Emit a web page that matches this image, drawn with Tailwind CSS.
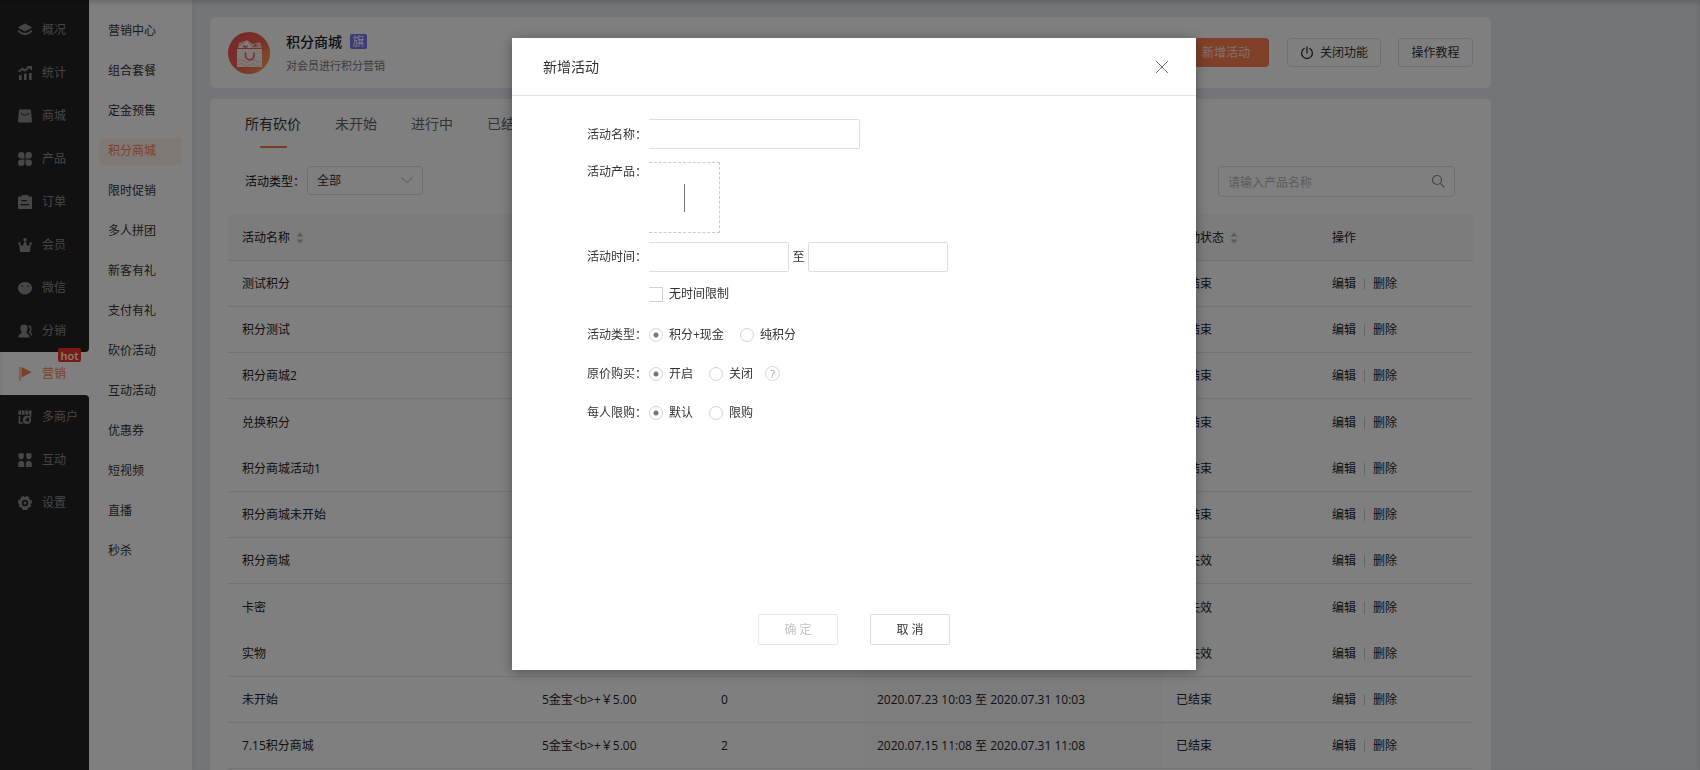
<!DOCTYPE html>
<html lang="zh-CN">
<head>
<meta charset="utf-8">
<title>积分商城</title>
<script src="https://cdn.jsdelivr.net/npm/@tailwindcss/browser@4"></script>
</head>
<body class="min-h-screen bg-[#e8eaef] font-['Open_Sans','Noto_Sans_CJK_SC',sans-serif] text-xs text-[#333]">
<div class="flex min-h-screen">
  <nav id="main-nav" aria-label="主导航" class="flex w-[89px] shrink-0 flex-col bg-white"></nav>
  <nav id="sub-nav" aria-label="营销" class="z-10 flex w-[103px] shrink-0 flex-col bg-white px-2 pt-[11px] shadow-[2px_0_4px_rgba(60,80,110,0.06)]"></nav>

  <main class="flex max-w-[1299px] grow flex-col pl-[18px] pt-[17px]">
    <header class="flex h-[71px] shrink-0 items-center rounded-md bg-white px-[18px]">
      <svg class="size-[42px]" viewBox="0 0 42 42" aria-hidden="true">
        <defs><linearGradient id="g" x1="0" y1="0" x2="1" y2="1"><stop offset="0" stop-color="#f04b5c"/><stop offset=".55" stop-color="#f2644c"/><stop offset="1" stop-color="#ffa35c"/></linearGradient></defs>
        <circle cx="21" cy="21" r="21" fill="url(#g)"/>
        <path d="M33 20l9-5a21 21 0 0 1-8 22z" fill="#ffa04a" opacity=".45"/>
        <path d="M10 16l1-5 8-3 6 4 7-2 2 6z" fill="#ffc9bd"/>
        <path d="M10 16l9-7 5 7z" fill="#fff"/>
        <path d="M14 15l2-2 2 1 2-1-1 3zM25 15l2-3 3 2z" fill="#ee6a62"/>
        <path d="M9 17h25v18H9z" fill="#fff" opacity=".92"/>
        <path d="M10 29q3-3 6 0t6 0 6 0 5 0M10 33q3-3 6 0t6 0 6 0 5 0" fill="none" stroke="#f6c2b6"/>
        <path d="M17.500 20.500v3a4.200 4.200 0 0 0 8.400 0v-3" fill="none" stroke="#ef6150" stroke-width="1.600"/>
      </svg>
      <div class="ml-4 grow pt-0.5">
        <div class="flex items-center gap-2">
          <h1 class="text-sm leading-5 font-medium text-[#222]">积分商城</h1>
          <span class="flex h-[15px] w-[17px] items-center justify-center rounded-xs bg-[#7476ee] text-xs leading-none text-white">旗</span>
        </div>
        <p class="mt-1 text-[11px] leading-5 text-[#777]">对会员进行积分营销</p>
      </div>
      <button class="h-[29px] w-[86px] rounded bg-[#ff7f50] text-white/80">新增活动</button>
      <button class="ml-[18px] flex h-[29px] w-[94px] items-center justify-center gap-1.5 rounded border border-[#dcdee2]">
        <svg class="size-3.5" viewBox="0 0 14 14" fill="none" stroke="#333" stroke-width="1.300" stroke-linecap="round" aria-hidden="true"><path d="M4.200 2.500a5.400 5.400 0 1 0 5.600 0M7 1v6"/></svg>关闭功能</button>
      <button class="ml-[17px] h-[29px] w-[75px] rounded border border-[#dcdee2]">操作教程</button>
    </header>

    <section class="mt-[11px] grow rounded-t bg-white px-[18px]">
      <div role="tablist" class="flex h-[49px] gap-[34px] pl-[17px] text-sm text-[#666]">
        <button role="tab" aria-selected="true" class="flex flex-col items-center justify-between pt-[15px] leading-5 text-[#333]">所有砍价<span class="h-0.5 w-[27px] rounded bg-[#ff7043]"></span></button>
        <button role="tab" class="pb-[14px] pt-[15px] leading-5">未开始</button>
        <button role="tab" class="pb-[14px] pt-[15px] leading-5">进行中</button>
        <button role="tab" class="pb-[14px] pt-[15px] leading-5">已结束</button>
      </div>
      <div class="mt-[18px] flex h-[31px] items-start justify-between pl-[17px] pr-[18px]">
        <div class="flex items-center">
          <label for="type" class="w-[62px] pt-0.5 text-[#111]">活动类型：</label>
          <div class="relative">
            <select id="type" class="h-[29px] w-[116px] appearance-none rounded border border-[#dcdee2] bg-transparent px-[9px]"><option>全部</option></select>
            <svg class="pointer-events-none absolute right-2.5 top-2.5 h-2 w-3" viewBox="0 0 12 8" fill="none" stroke="#aaa" aria-hidden="true"><path d="M.5 1.500L6 6.500l5.500-5"/></svg>
          </div>
        </div>
        <div class="relative">
          <input type="search" aria-label="请输入产品名称" placeholder="请输入产品名称" class="h-[31px] w-[237px] rounded-sm border border-[#dcdee2] px-[9px] pt-0.5 placeholder:text-[#b8b8b8]">
          <svg class="absolute right-2.5 top-2 size-3.5" viewBox="0 0 14 14" fill="none" stroke="#888" stroke-width="1.200" aria-hidden="true"><circle cx="6" cy="6" r="4.500"/><path d="M9.300 9.300l4 4"/></svg>
        </div>
      </div>
      <table class="mt-[17px] w-full table-fixed border-separate border-spacing-0 text-left text-[#222]">
        <colgroup><col class="w-[300px]"><col class="w-[179px]"><col class="w-[156px]"><col class="w-[299px]"><col class="w-[156px]"><col></colgroup>
        <thead class="bg-[#f8f8f9]">
          <tr class="h-[47px]">
            <th class="rounded-tl border-b border-[#e5e6e9] px-3.5 pt-0.5 font-normal"><span class="flex items-center gap-1">活动名称<svg class="size-3" viewBox="0 0 12 12" fill="#b5b5b9" aria-hidden="true"><path d="M2.500 4.500L6 .5l3.500 4zM2.500 7.500L6 11.500l3.500-4z"/></svg></span></th>
            <th class="border-b border-[#e5e6e9]"></th>
            <th class="border-b border-[#e5e6e9]"></th>
            <th class="border-b border-[#e5e6e9]"></th>
            <th class="border-b border-[#e5e6e9] px-3.5 pt-0.5 font-normal"><span class="flex items-center gap-1">活动状态<svg class="size-3" viewBox="0 0 12 12" fill="#b5b5b9" aria-hidden="true"><path d="M2.500 4.500L6 .5l3.500 4zM2.500 7.500L6 11.500l3.500-4z"/></svg></span></th>
            <th class="rounded-tr border-b border-[#e5e6e9] px-3.5 pt-0.5 font-normal">操作</th>
          </tr>
        </thead>
        <tbody id="rows"></tbody>
      </table>
    </section>
  </main>
</div>

<div class="fixed inset-0 z-20 flex items-start justify-center bg-black/50 pl-2 pt-[38px] shadow-[inset_0_3px_4px_rgba(0,0,0,0.15)]">
  <form role="dialog" aria-labelledby="dlg" class="flex min-h-[632px] w-[684px] flex-col bg-white shadow-[0_2px_12px_rgba(0,0,0,0.35)]">
    <div class="flex h-[58px] items-center justify-between border-b border-[#e3e3e8] pl-[31px] pr-7">
      <h2 id="dlg" class="text-sm">新增活动</h2>
      <button type="button" aria-label="关闭"><svg class="size-3" viewBox="0 0 12 12" fill="none" stroke="#777" aria-hidden="true"><path d="M0 0l12 12M12 0L0 12"/></svg></button>
    </div>
    <div class="flex grow flex-col pl-[75px] pt-[23px]">
      <div class="flex h-[30px] items-center">
        <label for="name" class="w-[62px] pt-0.5">活动名称：</label>
        <input id="name" class="h-[30px] w-[211px] rounded-r-xs border border-l-0 border-[#dddde4] px-2">
      </div>
      <div class="mt-[13px] flex items-start">
        <span class="w-[62px] leading-5">活动产品：</span>
        <button type="button" aria-label="选择产品" class="flex size-[71px] items-center justify-center border border-l-0 border-dashed border-[#ccc]"><span class="h-7 w-px bg-[#777]"></span></button>
      </div>
      <div class="mt-[9px] flex h-[30px] items-center">
        <label for="from" class="w-[62px]">活动时间：</label>
        <input id="from" class="h-[30px] w-[140px] rounded-r-xs border border-l-0 border-[#dddde4] px-2">
        <label for="to" class="w-[19px] text-center">至</label>
        <input id="to" class="h-[30px] w-[140px] rounded-xs border border-[#dddde4] px-2">
      </div>
      <label class="ml-[62px] mt-[14px] flex h-4 items-center gap-1.5"><input type="checkbox" class="h-[15px] w-[14px] appearance-none border border-l-0 border-[#d0d0d4]">无时间限制</label>
      <div class="mt-[13px] flex h-[39px] items-center" role="radiogroup" aria-label="活动类型">
        <span class="w-[62px]">活动类型：</span>
        <label class="flex items-center gap-1.5"><input type="radio" name="kind" checked class="size-3.5 appearance-none rounded-full border border-[#d4d4d8] checked:bg-[radial-gradient(#777_2px,transparent_3px)]">积分+现金</label>
        <label class="ml-4 flex items-center gap-1.5"><input type="radio" name="kind" class="size-3.5 appearance-none rounded-full border border-[#d4d4d8] checked:bg-[radial-gradient(#777_2px,transparent_3px)]">纯积分</label>
      </div>
      <div class="flex h-[39px] items-center" role="radiogroup" aria-label="原价购买">
        <span class="w-[62px]">原价购买：</span>
        <label class="flex items-center gap-1.5"><input type="radio" name="full" checked class="size-3.5 appearance-none rounded-full border border-[#d4d4d8] checked:bg-[radial-gradient(#777_2px,transparent_3px)]">开启</label>
        <label class="ml-4 flex items-center gap-1.5"><input type="radio" name="full" class="size-3.5 appearance-none rounded-full border border-[#d4d4d8] checked:bg-[radial-gradient(#777_2px,transparent_3px)]">关闭</label>
        <span class="ml-3 flex size-[15px] items-center justify-center rounded-full border border-[#d4d4d8] text-[11px] leading-none text-[#999]">?</span>
      </div>
      <div class="flex h-[39px] items-center" role="radiogroup" aria-label="每人限购">
        <span class="w-[62px]">每人限购：</span>
        <label class="flex items-center gap-1.5"><input type="radio" name="cap" checked class="size-3.5 appearance-none rounded-full border border-[#d4d4d8] checked:bg-[radial-gradient(#777_2px,transparent_3px)]">默认</label>
        <label class="ml-4 flex items-center gap-1.5"><input type="radio" name="cap" class="size-3.5 appearance-none rounded-full border border-[#d4d4d8] checked:bg-[radial-gradient(#777_2px,transparent_3px)]">限购</label>
      </div>
    </div>
    <div class="flex justify-center gap-8 pb-[25px]">
      <button type="button" disabled class="h-[31px] w-20 rounded-xs border border-[#e8e8e8] text-[#c4c4c4]">确 定</button>
      <button type="button" class="h-[31px] w-20 rounded-xs border border-[#dcdce4]">取 消</button>
    </div>
  </form>
</div>

<script>
const nav = [
  ['概况', '<path d="M7 1l6.500 3.500L7 8 .5 4.500z" stroke="currentColor" stroke-linejoin="round"/><path d="M.8 8.300Q7 14 13.200 8.300" fill="none" stroke="currentColor" stroke-width="2.200" stroke-linecap="round"/>'],
  ['统计', '<path d="M1 9h2.600v5H1zM6 7.500h2.600V14H6zM11 7h2.600v7H11z"/><path d="M.5 5.500L4.500 3l2.500 1.500L10.500 1.500" fill="none" stroke="currentColor" stroke-width="2"/><path d="M8.500 0H14v4.500z"/>'],
  ['商城', '<path fill-rule="evenodd" d="M2.500.5h9a1.500 1.500 0 0 1 1.500 1.300l1 10.200a1.500 1.500 0 0 1-1.500 1.500h-11A1.500 1.500 0 0 1 0 12L1 1.800A1.500 1.500 0 0 1 2.500.5zM3 3.500q4 4.500 8 0v1.500q-4 3-8 0z"/>'],
  ['产品', '<path d="M3.300 0A3.300 3.300 0 0 1 6.500 3.200v3.300H3.300a3.250 3.250 0 0 1 0-6.500zM10.700 0a3.250 3.250 0 0 1 0 6.500H7.500V3.200A3.300 3.300 0 0 1 10.700 0zM3.300 7.500h3.200v3.300A3.250 3.250 0 1 1 3.300 7.500zM7.500 7.500h3.200a3.250 3.250 0 1 1-3.200 3.300z"/>'],
  ['订单', '<path fill-rule="evenodd" d="M3.500 1.500V0h7v1.500H13a1 1 0 0 1 1 1V13a1 1 0 0 1-1 1H1a1 1 0 0 1-1-1V2.500a1 1 0 0 1 1-1zM3.500 5v1.300h5V5zM2.500 9v1.300h8.500V9z"/>'],
  ['会员', '<circle cx="7" cy="1.800" r="1.700"/><circle cx="1.300" cy="5.500" r="1.300"/><circle cx="12.700" cy="5.500" r="1.300"/><path d="M1 6l3.500 2L7 2.500 9.500 8 13 6l-1.200 8H2.200z"/>'],
  ['微信', '<path fill-rule="evenodd" d="M7 1c4 0 7 2.600 7 6s-3 6.500-7 6.500S0 10.400 0 7s3-6 7-6zM3.500 4.500v1.300H5V4.500zm5.500 0v1.300h1.500V4.500z"/>'],
  ['分销', '<path d="M6 .5a3.600 3.600 0 0 1 3.600 3.600c0 1.800-.6 3-1.400 3.900 0 1.500 3.300 1.800 3.300 5.500H.3C.3 9.800 3.800 9.500 3.800 8c-.9-.9-1.400-2.100-1.400-3.900A3.600 3.600 0 0 1 6 .5z"/><path d="M10.500 2c3.500.5 2.500 4.500 1 6.200 1.300.8 2 1.600 2.200 3.300" fill="none" stroke="currentColor" stroke-width="1.300"/>'],
  ['营销', '<path d="M1.500 0h1v14h-1zM3.500 0l10 5.300-10 5.200z"/>'],
  ['多商户', '<path d="M.5.5h2.800v4.300H1.500a1.300 1.300 0 0 1-1.300-1.300zM4 .5h2.600v4.300H4zM7.400.5H10v4.300H7.400zM10.700.5h2.800v3a1.300 1.300 0 0 1-1.300 1.300h-1.500z"/><path d="M1.500 6v7H5M12.500 5v2" fill="none" stroke="currentColor" stroke-width="1.600"/><path fill-rule="evenodd" d="M9 5.800a4.100 4.100 0 1 1 0 8.200 4.100 4.100 0 0 1 0-8.200zM9.500 7.500l-3 3.200h3V12H11V7.500z"/>'],
  ['互动', '<path d="M.5.500Q3-.3 5.800.5v3.500L4.500 6.300H1.800L.5 4zM8.200.5q2.800-.8 5.300 0v3.500l-1.300 2.300H9.500L8.200 4zM2 8h2.500l1.700 1.700V14H.3V9.700zM9.500 8H12l1.700 1.700V14H7.800V9.700z"/>'],
  ['设置', '<path fill-rule="evenodd" d="M5.500 0L7 1.200 8.500 0l2.700 1.200v2L13.500 4 14 7l-1.500 1.200.6 2.600-2.600.8L9 14H5l-1.500-2.400-2.600-.8.600-2.600L0 7l.5-3 2.300-.8v-2zM7 3.800a3.200 3.200 0 1 0 0 6.400 3.200 3.200 0 0 0 0-6.400z"/><circle cx="7" cy="7" r="1.500"/>']
];
const item = ([t, p]) => `<a href="#" class="${t === '营销'
  ? 'relative flex h-[43px] items-center gap-2.5 bg-white pl-[18px] text-[#ff7f50]'
  : 'flex h-[43px] items-center gap-2.5 pl-[18px] text-[#8c8c8c]'}"><svg class="size-3.5" viewBox="0 0 14 14" fill="currentColor" aria-hidden="true">${p}</svg>${t}${t === '营销'
  ? '<span class="absolute right-2 -top-1 flex h-3.5 w-[23px] items-center justify-center rounded-xs bg-[#f5342c] text-[11px] leading-none font-semibold text-white">hot</span>' : ''}</a>`;
document.getElementById('main-nav').innerHTML =
  `<div class="rounded-br bg-[#232323] pt-2">${nav.slice(0, 8).map(item).join('')}</div>${item(nav[8])}<div class="grow rounded-tr bg-[#232323]">${nav.slice(9).map(item).join('')}</div>`;

const sub = ['营销中心','组合套餐','定金预售','积分商城','限时促销','多人拼团','新客有礼','支付有礼','砍价活动','互动活动','优惠券','短视频','直播','秒杀'];
document.getElementById('sub-nav').innerHTML = sub.map(t => `<a href="#" class="flex h-10 items-center"><span class="${t === '积分商城'
  ? 'ml-0.5 flex h-[27px] w-[83px] items-center rounded bg-[#fff2ec] pl-[9px] text-[#ff7f50]' : 'pl-[11px]'}">${t}</span></a>`).join('');

const rows = [
  ['测试积分','','','','已结束'],['积分测试','','','','已结束'],['积分商城2','','','','已结束'],['兑换积分','','','','已结束'],
  ['积分商城活动1','','','','已结束'],['积分商城未开始','','','','已结束'],['积分商城','','','','已失效'],['卡密','','','','已失效'],
  ['实物','','','','已失效'],
  ['未开始','5金宝&lt;b&gt;+￥5.00','0','2020.07.23 10:03 至 2020.07.31 10:03','已结束'],
  ['7.15积分商城','5金宝&lt;b&gt;+￥5.00','2','2020.07.15 11:08 至 2020.07.31 11:08','已结束']
];
document.getElementById('rows').innerHTML = rows.map((r, i) => {
  const open = i === 3 || i === 7;
  const cell = open ? 'px-3.5' : 'border-b border-[#e5e6e9] px-3.5';
  const shaded = open ? 'bg-[#fafafb] px-3.5' : 'border-b border-[#e5e6e9] bg-[#fafafb] px-3.5';
  return `<tr class="${open ? 'h-[47px]' : 'h-[46px]'}">${r.map((c, j) => `<td class="${j === 3 ? shaded : cell}">${c}</td>`).join('')}<td class="${cell}"><span class="flex items-center"><a href="#">编辑</a><span class="mx-2 h-3 w-px bg-[#ccc]"></span><a href="#">删除</a></span></td></tr>`;
}).join('');
</script>
</body>
</html>
